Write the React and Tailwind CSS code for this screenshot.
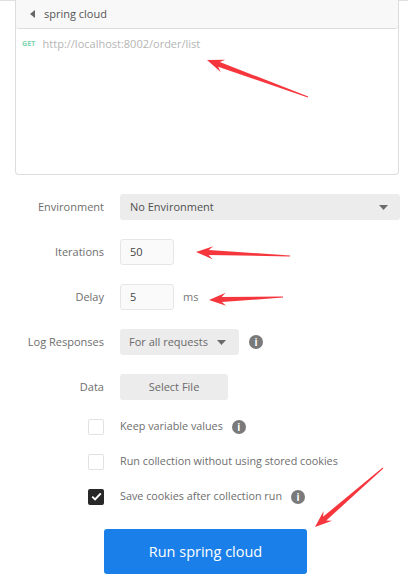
import React from 'react';

function arrowPoints(tx, ty, px, py, headLen, headW, shaftW) {
  const dx = px - tx;
  const dy = py - ty;
  const len = Math.sqrt(dx * dx + dy * dy);
  const ux = dx / len;
  const uy = dy / len;
  const nx = -uy;
  const ny = ux;
  const bx = px - ux * headLen;
  const by = py - uy * headLen;
  const nbx = px - ux * headLen * 0.75;
  const nby = py - uy * headLen * 0.75;
  const pts = [
    [px, py],
    [bx + nx * headW / 2, by + ny * headW / 2],
    [nbx + nx * shaftW / 2, nby + ny * shaftW / 2],
    [tx + nx * 0.5, ty + ny * 0.5],
    [tx - nx * 0.5, ty - ny * 0.5],
    [nbx - nx * shaftW / 2, nby - ny * shaftW / 2],
    [bx - nx * headW / 2, by - ny * headW / 2],
  ];
  return pts.map(function (p) { return p[0].toFixed(1) + ',' + p[1].toFixed(1); }).join(' ');
}

function Arrows() {
  const arrows = [
    [308, 97, 207, 60],
    [290, 256, 196, 252],
    [283, 297, 209, 300],
    [383, 468, 315, 527],
  ];
  return (
    <svg className="absolute left-0 top-0 pointer-events-none" width="408" height="579">
      {arrows.map(function (a, i) {
        return <polygon key={i} points={arrowPoints(a[0], a[1], a[2], a[3], 17, 13, 5)} fill="#f5363d" />;
      })}
    </svg>
  );
}

function Caret() {
  return (
    <svg width="9" height="5" viewBox="0 0 9 5">
      <path d="M0 0 L9 0 L4.5 5 Z" fill="#6b6b6b" />
    </svg>
  );
}

function Info() {
  return (
    <span className="size-[14px] rounded-full bg-[#7a7a7a] text-white text-[10px] font-bold flex items-center justify-center leading-none">i</span>
  );
}

function Row({ label, children }) {
  return (
    <div className="flex items-center h-[26px]">
      <div className="w-[104px] text-right text-[11px] text-[#6e6e6e]">{label}</div>
      <div className="ml-4 flex items-center">{children}</div>
    </div>
  );
}

function Check({ checked, label, info }) {
  return (
    <div className="flex items-center h-[17px] pl-[88px]">
      {checked ? (
        <span className="size-[16px] rounded-[2px] bg-[#282828] flex items-center justify-center">
          <svg width="11" height="9" viewBox="0 0 11 9">
            <path d="M1.2 4.6 L4.1 7.4 L9.8 1.4" stroke="#fff" strokeWidth="2" fill="none" />
          </svg>
        </span>
      ) : (
        <span className="size-[16px] rounded-[2px] border border-[#e2e2e2] bg-white" />
      )}
      <span className="ml-4 text-[10.8px] text-[#6e6e6e]">{label}</span>
      {info && <span className="ml-[9px]"><Info /></span>}
    </div>
  );
}

export default function App() {
  return (
    <div className="relative w-[408px] h-[579px] bg-white overflow-hidden" style={{ fontFamily: '"Open Sans", "Noto Sans", sans-serif' }}>
      <div className="h-px bg-[#e0e0e0]" />
      <div className="ml-[15px] mr-[9px] h-[175px] border-x border-b border-[#dcdcdc] rounded-b-[4px] flex flex-col -mt-px">
        <div className="h-[29px] bg-[#f8f8f8] border-b border-[#dcdcdc] flex items-center pl-[14px] rounded-b-[3px]">
          <svg width="5" height="8" viewBox="0 0 5 8">
            <path d="M5 0 L5 8 L0 4 Z" fill="#666" />
          </svg>
          <span className="ml-[9px] text-[11px] text-[#555]">spring cloud</span>
        </div>
        <div className="flex items-center h-[30px] pl-[6px]">
          <span className="text-[7px] font-bold text-[#7fd4b0] tracking-wide">GET</span>
          <span className="ml-[7px] text-[11px] text-[#b5b5b5]">http://localhost:8002/order/list</span>
        </div>
      </div>

      <div className="mt-[19px] flex flex-col gap-[19px]">
        <Row label="Environment">
          <div className="w-[280px] h-[26px] bg-[#ececec] rounded-[3px] flex items-center justify-between pl-[10px] pr-[12px] text-[11px] text-[#505050]">
            <span>No Environment</span>
            <Caret />
          </div>
        </Row>
        <Row label="Iterations">
          <div className="w-[54px] h-[26px] bg-[#fafafa] border border-[#e6e6e6] rounded-[3px] flex items-center pl-[9px] text-[11px] text-[#444]">50</div>
        </Row>
        <Row label="Delay">
          <div className="w-[54px] h-[26px] bg-[#fafafa] border border-[#e6e6e6] rounded-[3px] flex items-center pl-[9px] text-[11px] text-[#444]">5</div>
          <span className="ml-[9px] text-[11px] text-[#777]">ms</span>
        </Row>
        <Row label="Log Responses">
          <div className="w-[119px] h-[26px] bg-[#ececec] rounded-[3px] flex items-center justify-between pl-[9px] pr-[13px] text-[11px] text-[#6a6a6a]">
            <span>For all requests</span>
            <Caret />
          </div>
          <span className="ml-[10px]"><Info /></span>
        </Row>
        <Row label="Data">
          <div className="w-[108px] h-[26px] bg-[#ececec] rounded-[3px] flex items-center justify-center text-[11px] text-[#6a6a6a]">Select File</div>
        </Row>
      </div>

      <div className="mt-[18px] flex flex-col gap-[18px]">
        <Check label="Keep variable values" info />
        <Check label="Run collection without using stored cookies" />
        <Check checked label="Save cookies after collection run" info />
      </div>

      <div className="mt-[24px] pl-[104px]">
        <button className="w-[203px] h-[45px] bg-[#1a7fe9] rounded-[3px] text-white text-[14.5px]">Run spring cloud</button>
      </div>

      <Arrows />
    </div>
  );
}
